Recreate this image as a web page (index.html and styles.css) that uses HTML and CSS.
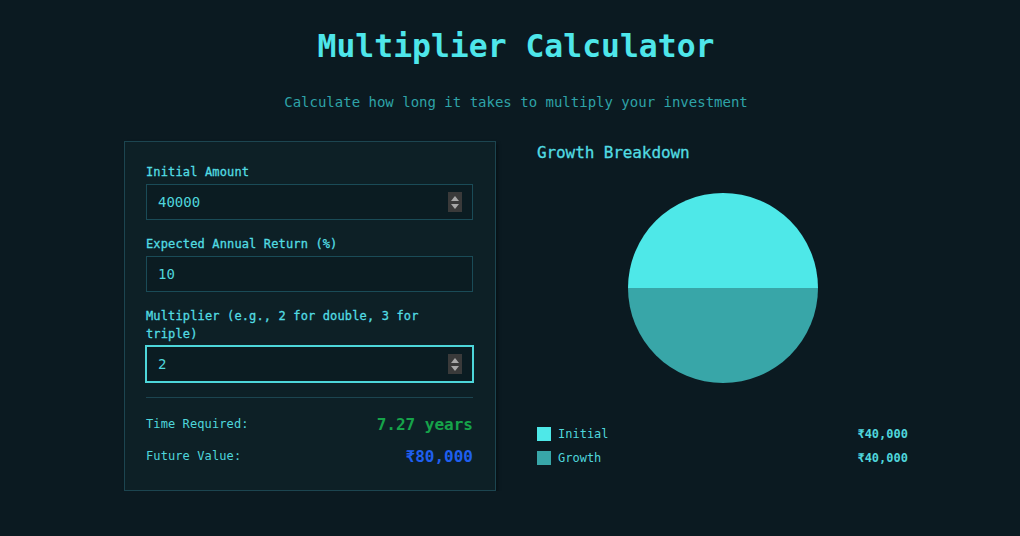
FILE: index.html
```html
<!DOCTYPE html>
<html lang="en">
<head>
<meta charset="utf-8">
<title>Multiplier Calculator</title>
<link rel="stylesheet" href="styles.css">
</head>
<body>
<main class="page">
  <h1 class="title">Multiplier Calculator</h1>
  <p class="subtitle">Calculate how long it takes to multiply your investment</p>
  <div class="layout">
    <section class="card">
      <div class="field">
        <label class="label">Initial Amount</label>
        <div class="input-wrap">
          <input class="input" type="text" value="40000">
          <span class="spinner"><i class="up"></i><i class="down"></i></span>
        </div>
      </div>
      <div class="field">
        <label class="label">Expected Annual Return (%)</label>
        <div class="input-wrap">
          <input class="input" type="text" value="10">
        </div>
      </div>
      <div class="field">
        <label class="label">Multiplier (e.g., 2 for double, 3 for triple)</label>
        <div class="input-wrap">
          <input class="input focused" type="text" value="2">
          <span class="spinner"><i class="up"></i><i class="down"></i></span>
        </div>
      </div>
      <div class="results">
        <div class="row"><span class="row-label">Time Required:</span><span class="val green">7.27 years</span></div>
        <div class="row"><span class="row-label">Future Value:</span><span class="val blue">₹80,000</span></div>
      </div>
    </section>
    <section class="breakdown">
      <h2 class="bd-title">Growth Breakdown</h2>
      <div class="chart">
        <svg width="190" height="190" viewBox="-95 -95 190 190">
          <path d="M -95 0 A 95 95 0 0 1 95 0 Z" fill="#4ee8e8"/>
          <path d="M 95 0 A 95 95 0 0 1 -95 0 Z" fill="#38a6a8"/>
        </svg>
      </div>
      <ul class="legend">
        <li class="legend-row"><span class="swatch s1"></span><span class="lg-name">Initial</span><span class="lg-val">₹40,000</span></li>
        <li class="legend-row"><span class="swatch s2"></span><span class="lg-name">Growth</span><span class="lg-val">₹40,000</span></li>
      </ul>
    </section>
  </div>
</main>
</body>
</html>
```
FILE: styles.css
```css
* { box-sizing: border-box; }
html, body { margin: 0; padding: 0; }
body {
  background: #0b1a21;
  font-family: "DejaVu Sans Mono", "Liberation Mono", monospace;
  color: #4fd6dc;
  padding-left: 12px;
}
.page {
  width: 784px;
  margin: 0 auto;
  padding-top: 27px;
}
.title {
  margin: 0;
  text-align: center;
  font-size: 31.4px;
  line-height: 38px;
  font-weight: bold;
  color: #4ee6ea;
}
.subtitle {
  margin: 28px 0 0;
  text-align: center;
  font-size: 14px;
  line-height: 18px;
  color: #2ea3a8;
}
.layout {
  display: grid;
  grid-template-columns: 372px 371px;
  column-gap: 41px;
  margin-top: 30px;
  align-items: start;
}
.card {
  background: #0d2026;
  border: 1px solid #1c4550;
  padding: 21px 22px 22px 21px;
  box-shadow: 2px 2px 3px rgba(0,0,0,0.35);
}
.field { margin-bottom: 15px; }
.label {
  display: block;
  font-size: 12px;
  line-height: 18px;
  letter-spacing: 0.14px;
  font-weight: normal;
  -webkit-text-stroke: 0.3px #52dce2;
  color: #52dce2;
  margin-bottom: 3px;
}
.input-wrap { position: relative; }
.input {
  display: block;
  width: 100%;
  height: 36px;
  background: #0b1c22;
  border: 1px solid #1a4b57;
  color: #4fd6dc;
  font-family: inherit;
  font-size: 14px;
  padding: 0 11px;
  outline: none;
}
.input.focused {
  border-color: #4dd6da;
  box-shadow: 0 0 0 1px #4dd6da;
}
.spinner {
  position: absolute;
  right: 11px;
  top: 50%;
  margin-top: -10px;
  width: 14px;
  height: 20px;
  background: #3a3a3a;
  display: flex;
  flex-direction: column;
  align-items: center;
  justify-content: center;
  gap: 3px;
}
.spinner i { display: block; width: 0; height: 0; border-left: 4px solid transparent; border-right: 4px solid transparent; }
.spinner .up { border-bottom: 5px solid #a8a8a8; }
.spinner .down { border-top: 5px solid #a8a8a8; }
.results {
  border-top: 1px solid #1c4550;
  padding-top: 14px;
  display: flex;
  flex-direction: column;
  gap: 8px;
}
.row {
  display: flex;
  justify-content: space-between;
  align-items: center;
  height: 24px;
}
.row-label { font-size: 12px; color: #4fd6dc; letter-spacing: 0.1px; }
.val { font-size: 16px; font-weight: bold; }
.green { color: #16a34a; }
.blue { color: #1f5fef; }
.bd-title {
  margin: 0;
  font-size: 16px;
  line-height: 24px;
  font-weight: normal;
  letter-spacing: -0.1px;
  -webkit-text-stroke: 0.3px #52dce2;
  color: #52dce2;
}
.chart {
  height: 250px;
  display: flex;
  align-items: center;
  justify-content: center;
  margin-top: -2px;
}
.legend { list-style: none; margin: 9px 0 0; padding: 0; }
.legend-row {
  display: flex;
  align-items: center;
  height: 24px;
  font-size: 12px;
}
.swatch { width: 14px; height: 14px; margin-right: 7px; }
.s1 { background: #4ee8e8; }
.s2 { background: #38a6a8; }
.lg-name { flex: 1; color: #4fd6dc; }
.lg-val { font-weight: bold; color: #4fd6dc; }
```
